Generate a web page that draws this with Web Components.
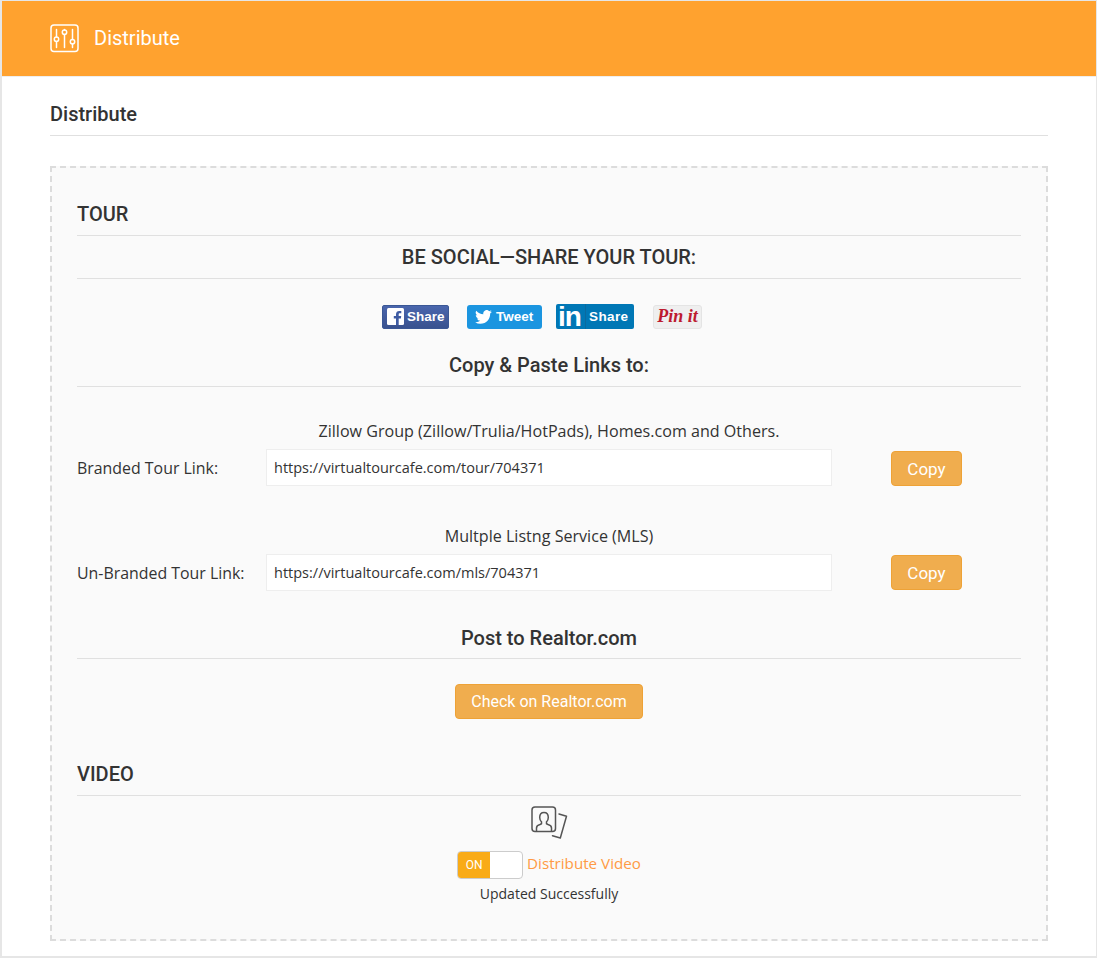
<!DOCTYPE html>
<html lang="en">
<head>
<meta charset="utf-8">
<title>Distribute</title>
<style>
    html, body { margin: 0; background: #fff; }
    body { font-family: "Open Sans", sans-serif; color: #333; }
</style>
</head>
<body>
<distribute-page>
    <page-header slot="header">Distribute</page-header>
    <h-title>Distribute</h-title>
    <dashed-box>
        <section-title kind="left" style="--top:34px;--pad:9px">TOUR</section-title>
        <section-title kind="center" style="--top:9px;--pad:9px">BE SOCIAL—SHARE YOUR TOUR:</section-title>
        <share-bar></share-bar>
        <section-title kind="sub" style="--top:24px;--pad:9px">Copy &amp; Paste Links to:</section-title>
        <link-row style="--top:32px;--btn-top:2px" caption="Zillow Group (Zillow/Trulia/HotPads), Homes.com and Others." label="Branded Tour Link:" value="https://virtualtourcafe.com/tour/704371"></link-row>
        <link-row style="--top:38px" caption="Multple Listng Service (MLS)" label="Un-Branded Tour Link:" value="https://virtualtourcafe.com/mls/704371"></link-row>
        <section-title kind="sub" style="--top:35px;--pad:8px">Post to Realtor.com</section-title>
        <realtor-check></realtor-check>
        <section-title kind="left" style="--top:43px">VIDEO</section-title>
        <video-toggle></video-toggle>
    </dashed-box>
</distribute-page>

<script>
// outer frame of the page
class DistributePage extends HTMLElement {
    constructor(){
        super();
        this.attachShadow({mode: 'open'});
        this.shadowRoot.innerHTML = `
            <style>
                :host {
                    display: block;
                    box-sizing: border-box;
                    height: 958px;
                    border: 2px solid #e6e6e6;
                    border-top-width: 1px;
                    border-right-width: 1px;
                    background: #fff;
                    overflow: hidden;
                }
                main { padding: 0 48px 0 48px; }
            </style>
            <slot name="header"></slot>
            <main><slot></slot></main>
        `;
    }
}

class PageHeader extends HTMLElement {
    constructor(){
        super();
        this.attachShadow({mode: 'open'});
        this.shadowRoot.innerHTML = `
            <style>
                :host {
                    display: flex;
                    align-items: center;
                    gap: 14px;
                    height: 76px;
                    padding-left: 48px;
                    background: #ffa22f;
                    color: #fff;
                    font: 400 20px "Roboto", sans-serif;
                    border-bottom: 1px solid #eee;
                    box-sizing: border-box;
                }
                svg { display: block; }
                span { margin-bottom: 2px; }
            </style>
            <svg width="30" height="29" viewBox="0 0 30 29" fill="none" stroke="#fff" stroke-width="1.5" stroke-linecap="round">
                <rect x="1" y="1" width="27" height="26.5" rx="3"/>
                <path d="M6.5 5.5v7.5M6.5 17.5v6M14.5 5.5v.5M14.5 10.5v13M22.500 5.500v10M22.500 20v3.500"/>
                <circle cx="6.500" cy="15.200" r="2.200"/>
                <circle cx="14.500" cy="8.200" r="2.200"/>
                <circle cx="22.500" cy="17.700" r="2.200"/>
            </svg>
            <span><slot></slot></span>
        `;
    }
}

class HTitle extends HTMLElement {
    constructor(){
        super();
        this.attachShadow({mode: 'open'});
        this.shadowRoot.innerHTML = `
            <style>
                :host {
                    display: block;
                    box-sizing: border-box;
                    height: 59px;
                    padding-top: 25px;
                    border-bottom: 1px solid #e0e0e0;
                    font: 500 20px/24px "Roboto", sans-serif;
                    color: #333;
                    margin-bottom: 30px;
                }
            </style>
            <slot></slot>
        `;
    }
}

class DashedBox extends HTMLElement {
    constructor(){
        super();
        this.attachShadow({mode: 'open'});
        this.shadowRoot.innerHTML = `
            <style>
                :host {
                    display: block;
                    box-sizing: border-box;
                    height: 775px;
                    padding: 0 25px;
                    border: 2px dashed #dcdcdc;
                    background: #fafafa;
                }
            </style>
            <slot></slot>
        `;
    }
}

// heading with a rule below it: left, center or smaller sub heading
class SectionTitle extends HTMLElement {
    constructor(){
        super();
        this.attachShadow({mode: 'open'});
        this.shadowRoot.innerHTML = `
            <style>
                :host {
                    display: block;
                    margin-top: var(--top, 0);
                    padding-bottom: var(--pad, 9px);
                    border-bottom: 1px solid #e0e0e0;
                    font: 500 20px/24px "Roboto", sans-serif;
                    color: #333;
                }
                :host([kind="center"]), :host([kind="sub"]) { text-align: center; }
            </style>
            <slot></slot>
        `;
    }
}

class ShareBar extends HTMLElement {
    constructor(){
        super();
        this.attachShadow({mode: 'open'});
        this.shadowRoot.innerHTML = `
            <style>
                :host {
                    display: flex;
                    justify-content: center;
                    align-items: center;
                    height: 25px;
                    margin-top: 25px;
                    padding-right: 14px;
                    font: 700 13.5px "Liberation Sans", Arial, sans-serif;
                    color: #fff;
                }
                div { box-sizing: border-box; display: flex; align-items: center; }
                .fb { width: 67px; height: 24px; margin-right: 18px; background: linear-gradient(#4a66ad, #39528f); border: 1px solid #3a5795; border-radius: 2px; padding-left: 4px; gap: 3px; }
                .tw { width: 75px; height: 24px; margin-right: 14px; background: #1b95e0; border-radius: 3px; padding-left: 8px; gap: 4px; }
                .li { width: 78px; height: 25px; margin-right: 19px; background: #0077b5; border-radius: 2px; padding-left: 2px; }
                .li b { font-size: 28px; width: 27px; line-height: 25px; border-right: 1px solid #0a6a9f; height: 25px; letter-spacing: -1px; }
                .li span { margin-left: 3px; letter-spacing: .4px; }
                .pin { width: 49px; height: 24px; background: #efefef; border: 1px solid #e4e4e4; border-radius: 3px; justify-content: center; color: #bd1a2f; font: italic 700 18px "Liberation Serif", serif; }
            </style>
            <div class="fb">
                <svg width="17" height="17" viewBox="0 0 17 17"><rect width="17" height="17" rx="1.5" fill="#fff"/><path d="M11.700 17v-6.500h2.200l.3-2.500h-2.500V6.400c0-.7.2-1.200 1.200-1.200h1.400V3c-.3 0-1-.1-2-.1-2 0-3.300 1.200-3.300 3.400V8H6.800v2.500H9V17z" fill="#3f5ca3"/></svg>
                <span>Share</span>
            </div>
            <div class="tw">
                <svg width="17" height="14" viewBox="0 0 24 20"><path d="M24 2.400a9.800 9.800 0 0 1-2.800.8A4.900 4.900 0 0 0 23.300.5a9.800 9.800 0 0 1-3.100 1.200 4.900 4.900 0 0 0-8.400 4.500A14 14 0 0 1 1.700 1a4.900 4.900 0 0 0 1.500 6.600 4.900 4.900 0 0 1-2.200-.6c0 2.400 1.700 4.400 3.900 4.900a4.900 4.900 0 0 1-2.200.1 4.900 4.900 0 0 0 4.600 3.400A9.900 9.900 0 0 1 0 17.400 14 14 0 0 0 7.500 19.600c9.100 0 14.300-7.700 14-14.600A10 10 0 0 0 24 2.400z" fill="#fff"/></svg>
                <span>Tweet</span>
            </div>
            <div class="li"><b>in</b><span>Share</span></div>
            <div class="pin"><span>Pin it</span></div>
        `;
    }
}

class LinkRow extends HTMLElement {
    constructor(){
        super();
        this.attachShadow({mode: 'open'});
        this.shadowRoot.innerHTML = `
            <style>
                :host {
                    display: block;
                    margin-top: var(--top, 0);
                    font: 400 15.9px "Open Sans", sans-serif;
                    color: #333;
                }
                p { margin: 0 0 6px; text-align: center; line-height: 24px; font-size: 16.1px; }
                .row { display: grid; grid-template-columns: 189px 566px 59px 71px; align-items: start; height: 37px; }
                label { line-height: 39px; }
                input {
                    box-sizing: border-box;
                    width: 100%;
                    height: 37px;
                    padding: 0 7px;
                    border: 1px solid #eee;
                    background: #fff;
                    color: #333;
                    font: 400 14.5px "Open Sans", sans-serif;
                    outline: none;
                }
                button {
                    grid-column: 4;
                    box-sizing: border-box;
                    height: 35px;
                    margin-top: var(--btn-top, 1px);
                    background: #f0ad4e;
                    border: 1px solid #eea236;
                    border-radius: 4px;
                    color: #fff;
                    font: 400 17px "Roboto", sans-serif;
                    padding: 0;
                }
            </style>
            <p></p>
            <div class="row">
                <label></label>
                <input type="text" readonly>
                <button type="button">Copy</button>
            </div>
        `;
    }

    connectedCallback(){
        this.shadowRoot.querySelector('p').textContent = this.getAttribute('caption');
        this.shadowRoot.querySelector('label').textContent = this.getAttribute('label');
        this.shadowRoot.querySelector('input').value = this.getAttribute('value');
    }
}

class RealtorCheck extends HTMLElement {
    constructor(){
        super();
        this.attachShadow({mode: 'open'});
        this.shadowRoot.innerHTML = `
            <style>
                :host { display: flex; justify-content: center; margin-top: 25px; }
                button {
                    box-sizing: border-box;
                    width: 188px;
                    height: 35px;
                    background: #f0ad4e;
                    border: 1px solid #eea236;
                    border-radius: 4px;
                    color: #fff;
                    font: 400 16px "Roboto", sans-serif;
                    padding: 0;
                }
            </style>
            <button type="button">Check on Realtor.com</button>
        `;
    }
}

class VideoToggle extends HTMLElement {
    constructor(){
        super();
        this.attachShadow({mode: 'open'});
        this.shadowRoot.innerHTML = `
            <style>
                :host {
                    display: flex;
                    flex-direction: column;
                    align-items: center;
                    padding-top: 10px;
                    font: 400 14px "Open Sans", sans-serif;
                    color: #333;
                }
                svg { display: block; margin-left: 2px; }
                .line { display: flex; align-items: center; gap: 4px; margin-top: 11px; height: 28px; }
                .switch { box-sizing: border-box; display: flex; width: 66px; height: 28px; border: 1px solid #ccc; border-radius: 4px; background: #fff; overflow: hidden; }
                .on { width: 32px; background: #f9ab17; color: #fff; font: 400 12px/26px "Roboto", sans-serif; text-align: center; }
                .name { color: #ff9a45; font-size: 15.2px; margin-bottom: 5px; }
                .msg { margin-top: 5px; line-height: 20px; }
            </style>
            <svg width="38" height="34" viewBox="0 0 38 34" fill="none" stroke="#555" stroke-width="1.500" stroke-linecap="round" stroke-linejoin="round">
                <rect x="1" y="1" width="23.500" height="24.500" rx="3"/>
                <path d="M5.500 25v-3c0-2 1.500-3 3.500-3.500l1.500-.7v-2c-1.200-1-1.800-2.500-1.800-4.300 0-3 1.800-5 4.300-5s4.300 2 4.300 5c0 1.800-.6 3.300-1.800 4.300v2l1.500.7c2 .5 3.500 1.500 3.500 3.500v3"/>
                <path d="M28 8l7.500 2.200-6.200 21.800-7.800-2.300"/>
            </svg>
            <div class="line">
                <div class="switch"><div class="on">ON</div></div>
                <span class="name">Distribute Video</span>
            </div>
            <div class="msg">Updated Successfully</div>
        `;
    }
}

customElements.define('distribute-page', DistributePage);
customElements.define('page-header', PageHeader);
customElements.define('h-title', HTitle);
customElements.define('dashed-box', DashedBox);
customElements.define('section-title', SectionTitle);
customElements.define('share-bar', ShareBar);
customElements.define('link-row', LinkRow);
customElements.define('realtor-check', RealtorCheck);
customElements.define('video-toggle', VideoToggle);
</script>
</body>
</html>
